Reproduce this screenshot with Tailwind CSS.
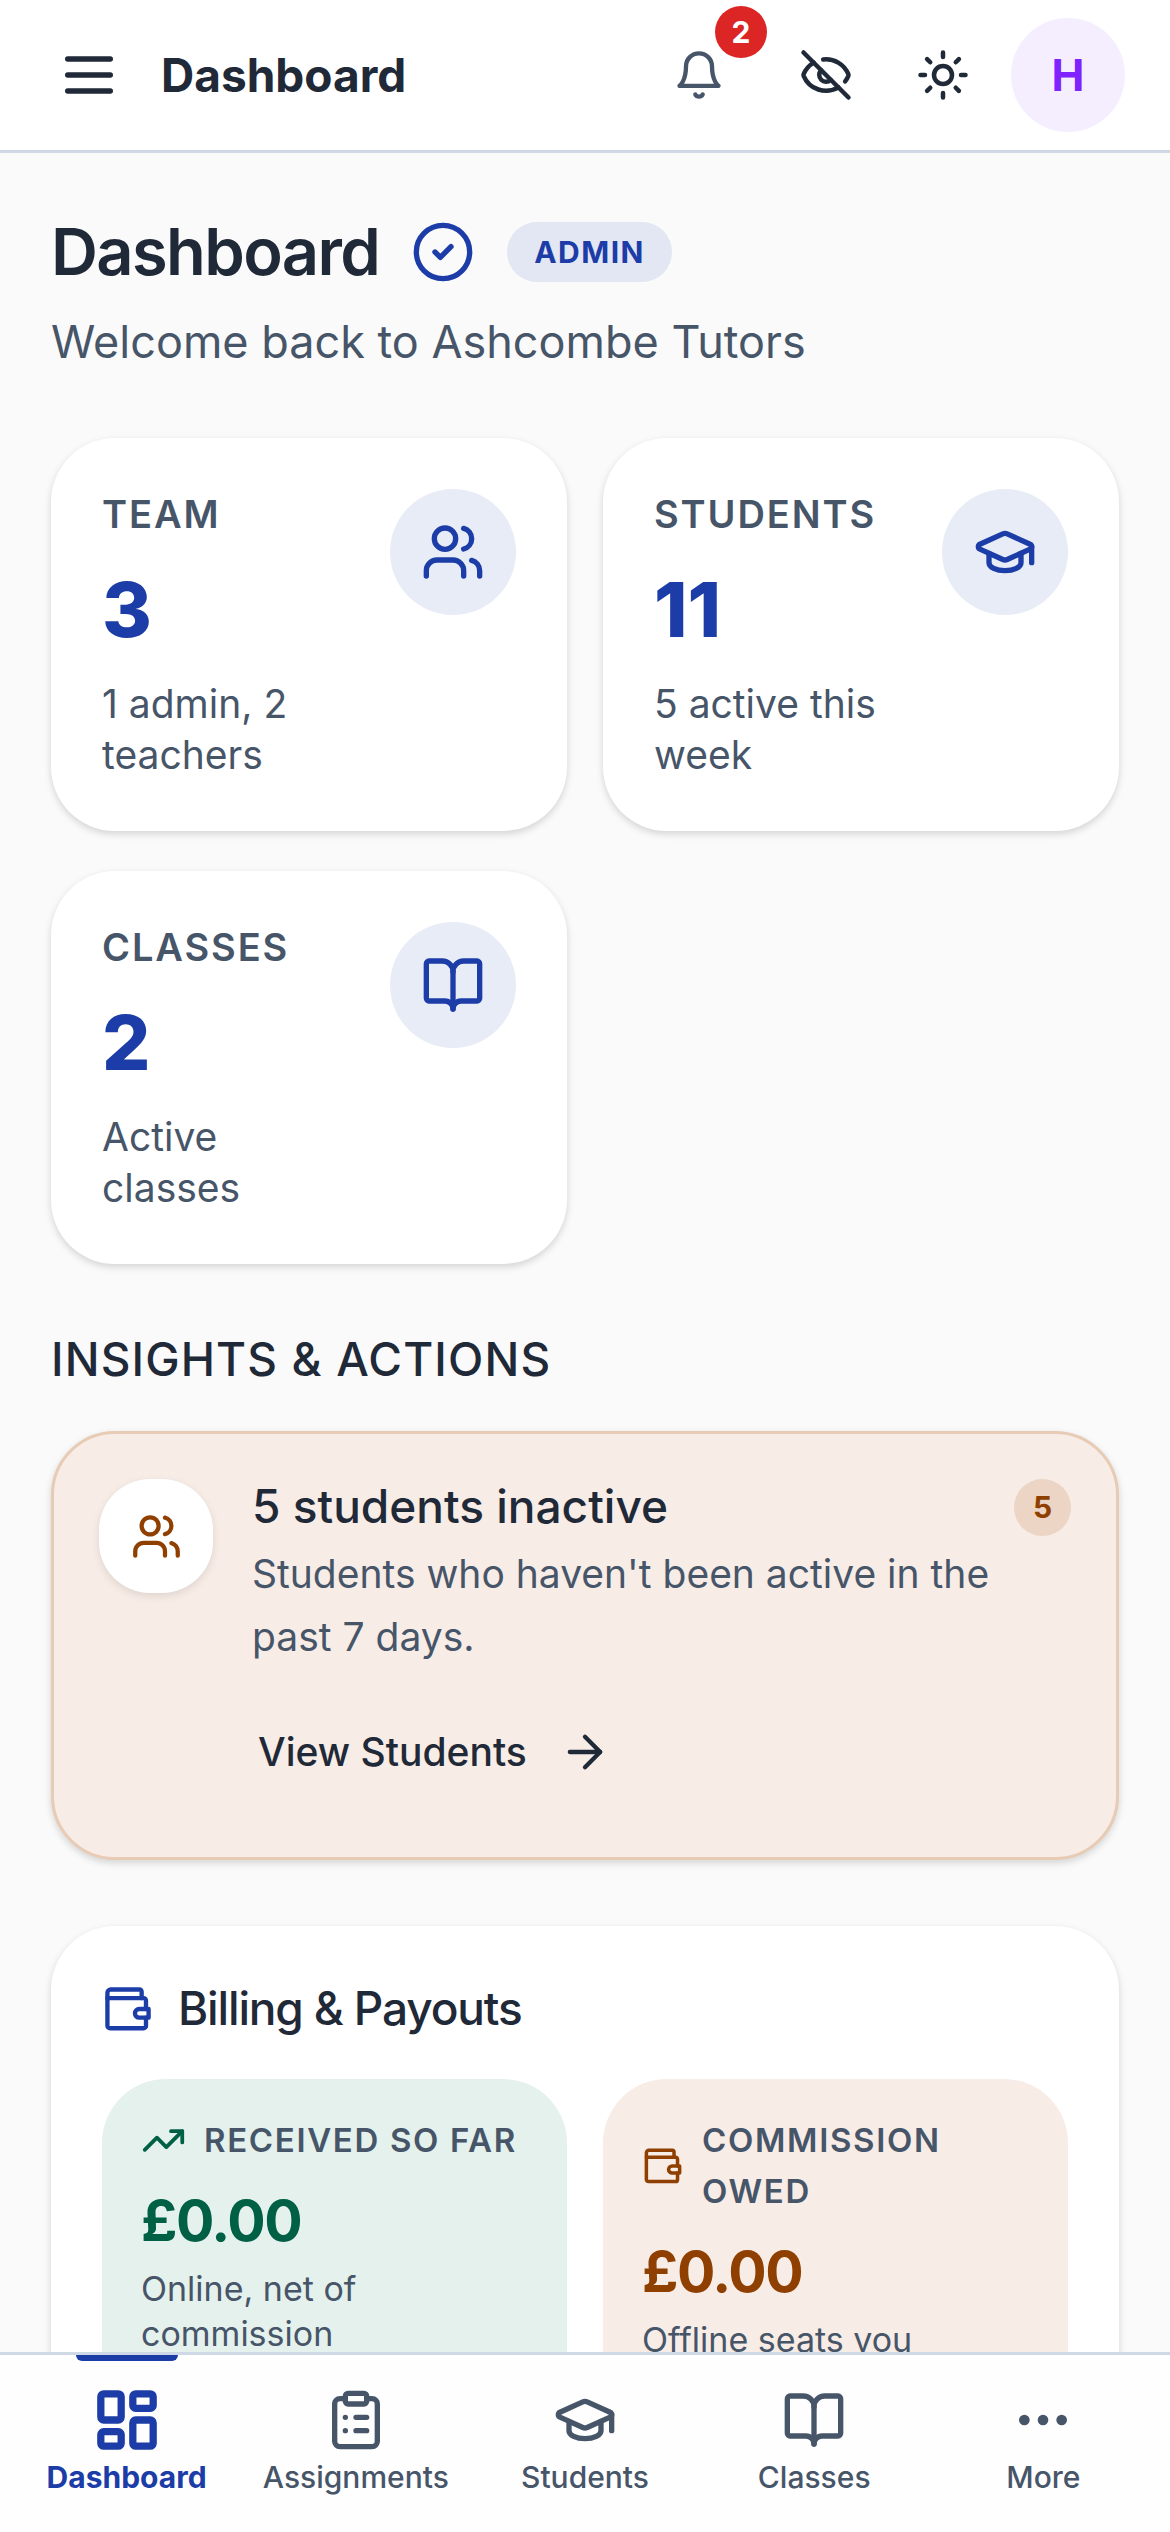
<!DOCTYPE html>
<html lang="en">
<head>
<meta charset="utf-8"/>
<title>Dashboard – Ashcombe Tutors</title>
<meta content="width=device-width, initial-scale=1.0" name="viewport"/>
<script src="https://cdn.jsdelivr.net/npm/@tailwindcss/browser@4"></script>
</head>
<body class="h-screen flex flex-col bg-[#fafafa] text-[#1f2937] font-[Inter,sans-serif]">

<!-- Shared icons -->
<svg class="hidden" xmlns="http://www.w3.org/2000/svg">
<symbol id="i-users" viewBox="0 0 24 24"><path d="M16 21v-2a4 4 0 0 0-4-4H6a4 4 0 0 0-4 4v2"/><circle cx="9" cy="7" r="4"/><path d="M22 21v-2a4 4 0 0 0-3-3.87"/><path d="M16 3.13a4 4 0 0 1 0 7.75"/></symbol>
<symbol id="i-cap" viewBox="0 0 24 24"><path d="M21.42 10.922a1 1 0 0 0-.019-1.838L12.83 5.18a2 2 0 0 0-1.66 0L2.6 9.08a1 1 0 0 0 0 1.832l8.57 3.908a2 2 0 0 0 1.66 0z"/><path d="M22 10v6"/><path d="M6 12.5V16a6 3 0 0 0 12 0v-3.5"/></symbol>
<symbol id="i-book" viewBox="0 0 24 24"><path d="M12 7v14"/><path d="M3 18a1 1 0 0 1-1-1V4a1 1 0 0 1 1-1h5a4 4 0 0 1 4 4 4 4 0 0 1 4-4h5a1 1 0 0 1 1 1v13a1 1 0 0 1-1 1h-6a3 3 0 0 0-3 3 3 3 0 0 0-3-3z"/></symbol>
<symbol id="i-wallet" viewBox="0 0 24 24"><path d="M18.300 7V4a1 1 0 0 0-1-1H4a1.500 1.500 0 0 0-1.500 1.500v15.200a1.200 1.200 0 0 0 1.200 1.200h15.500a1.100 1.100 0 0 0 1.100-1.100V16"/><path d="M2.500 7h16.700a1.100 1.100 0 0 1 1.100 1.100V12"/><path d="M21.500 12h-4.300a2 2 0 0 0 0 4h4.300z"/></symbol>
</svg>

<header class="shrink-0 flex items-center justify-between bg-white border-b-3 border-[#cfd9e5] h-[153px] pl-[57px] pr-[45px]">
<div class="flex items-center gap-10">
<button aria-label="Open menu"><svg class="size-16" viewBox="0 0 24 24" fill="none" stroke="currentColor" stroke-width="2" stroke-linecap="round"><path d="M4 6h16M4 12h16M4 18h16"/></svg></button>
<span class="text-[46px] font-bold">Dashboard</span>
</div>
<div class="flex items-center">
<button aria-label="Notifications, 2 unread" class="relative flex items-center justify-center w-[136px] h-[114px] text-[#475569]">
<svg class="size-13" viewBox="0 0 24 24" fill="none" stroke="currentColor" stroke-width="2" stroke-linecap="round" stroke-linejoin="round"><path d="M6 8a6 6 0 0 1 12 0c0 7 3 9 3 9H3s3-2 3-9"/><path d="M10.300 21a1.940 1.940 0 0 0 3.400 0"/></svg>
<span class="absolute -top-3 right-0 size-13 flex items-center justify-center rounded-full bg-[#dc2626] text-white text-[30px] font-bold">2</span>
</button>
<button aria-label="Hide amounts" class="flex items-center justify-center w-[117px] h-[114px]">
<svg class="size-[54px]" viewBox="0 0 24 24" fill="none" stroke="currentColor" stroke-width="2" stroke-linecap="round" stroke-linejoin="round"><path d="M10.733 5.076a10.744 10.744 0 0 1 11.205 6.575 1 1 0 0 1 0 .696 10.747 10.747 0 0 1-1.444 2.490"/><path d="M14.084 14.158a3 3 0 0 1-4.242-4.242"/><path d="M17.479 17.499a10.750 10.750 0 0 1-15.417-5.151 1 1 0 0 1 0-.696 10.750 10.750 0 0 1 4.446-5.143"/><path d="m2 2 20 20"/></svg>
</button>
<button aria-label="Switch theme" class="flex items-center justify-center w-[117px] h-[114px]">
<svg class="size-[54px]" viewBox="0 0 24 24" fill="none" stroke="currentColor" stroke-width="2" stroke-linecap="round"><circle cx="12" cy="12" r="4"/><path d="M12 2v2M12 20v2M4.930 4.930l1.410 1.410M17.660 17.660l1.410 1.410M2 12h2M20 12h2M6.340 17.660l-1.410 1.410M19.070 4.930l-1.410 1.410"/></svg>
</button>
<button aria-label="Account" class="ml-2.5 size-[114px] rounded-full bg-[#f4eeff] text-[#7f22fe] text-[44px] font-bold">H</button>
</div>
</header>

<main class="flex-1 min-h-0 overflow-y-auto [scrollbar-width:none] px-[51px] pt-[57px]">
<div class="flex items-center">
<h1 class="text-[65px] leading-[84px] font-semibold tracking-tight">Dashboard</h1>
<svg class="size-16 ml-8 text-[#1c3ca8]" viewBox="0 0 24 24" fill="none" stroke="currentColor" stroke-width="2" stroke-linecap="round" stroke-linejoin="round"><circle cx="12" cy="12" r="10"/><path d="m9 12 2 2 4-4"/></svg>
<span class="ml-8 px-[27px] rounded-full bg-[#e3e7f3] text-[#1c3ca8] text-[30px] leading-[60px] font-bold tracking-wider">ADMIN</span>
</div>
<p class="mt-3 text-[45px] leading-[72px] text-[#475569]">Welcome back to Ashcombe Tutors</p>

<section class="mt-[60px] grid grid-cols-2 gap-x-9 gap-y-10">
<div class="flex justify-between bg-white rounded-[64px] p-[51px] shadow-[0_3px_9px_rgba(0,0,0,0.1),0_3px_6px_rgba(0,0,0,0.06)]">
<div>
<h2 class="text-[38px] leading-[51px] font-semibold tracking-wider text-[#475569]">TEAM</h2>
<p class="mt-6 text-[76px] leading-[90px] font-extrabold text-[#1c3ca8]">3</p>
<p class="mt-6 text-[39px] leading-[51px] text-[#475569]">1 admin, 2<br>teachers</p>
</div>
<div class="shrink-0 size-[126px] flex items-center justify-center rounded-full bg-[#e8ecf7] text-[#1c3ca8]"><svg class="size-16" fill="none" stroke="currentColor" stroke-width="2" stroke-linecap="round" stroke-linejoin="round"><use href="#i-users"/></svg></div>
</div>
<div class="flex justify-between bg-white rounded-[64px] p-[51px] shadow-[0_3px_9px_rgba(0,0,0,0.1),0_3px_6px_rgba(0,0,0,0.06)]">
<div>
<h2 class="text-[38px] leading-[51px] font-semibold tracking-wider text-[#475569]">STUDENTS</h2>
<p class="mt-6 text-[76px] leading-[90px] font-extrabold text-[#1c3ca8]">11</p>
<p class="mt-6 text-[39px] leading-[51px] text-[#475569]">5 active this<br>week</p>
</div>
<div class="shrink-0 size-[126px] flex items-center justify-center rounded-full bg-[#e8ecf7] text-[#1c3ca8]"><svg class="size-16" fill="none" stroke="currentColor" stroke-width="2" stroke-linecap="round" stroke-linejoin="round"><use href="#i-cap"/></svg></div>
</div>
<div class="flex justify-between bg-white rounded-[64px] p-[51px] shadow-[0_3px_9px_rgba(0,0,0,0.1),0_3px_6px_rgba(0,0,0,0.06)]">
<div>
<h2 class="text-[38px] leading-[51px] font-semibold tracking-wider text-[#475569]">CLASSES</h2>
<p class="mt-6 text-[76px] leading-[90px] font-extrabold text-[#1c3ca8]">2</p>
<p class="mt-6 text-[39px] leading-[51px] text-[#475569]">Active<br>classes</p>
</div>
<div class="shrink-0 size-[126px] flex items-center justify-center rounded-full bg-[#e8ecf7] text-[#1c3ca8]"><svg class="size-16" fill="none" stroke="currentColor" stroke-width="2" stroke-linecap="round" stroke-linejoin="round"><use href="#i-book"/></svg></div>
</div>
</section>

<h2 class="mt-16 text-[46px] leading-[63px] font-medium tracking-wide">INSIGHTS &amp; ACTIONS</h2>

<section class="mt-10 flex items-start bg-[#f7ece6] border-3 border-[#e8cbb5] rounded-[64px] p-[45px] shadow-[0_3px_9px_rgba(0,0,0,0.1),0_3px_6px_rgba(0,0,0,0.06)]">
<div class="shrink-0 size-[114px] flex items-center justify-center rounded-[51px] bg-white text-[#8f3f00] shadow-[0_3px_9px_rgba(0,0,0,0.1)]"><svg class="size-[51px]" fill="none" stroke="currentColor" stroke-width="2" stroke-linecap="round" stroke-linejoin="round"><use href="#i-users"/></svg></div>
<div class="flex-1 ml-[39px]">
<div class="flex items-start justify-between">
<h3 class="text-[46px] leading-[54px] font-medium">5 students inactive</h3>
<span class="size-[57px] flex items-center justify-center rounded-full bg-[#ecd5c4] text-[#8f3f00] text-[30px] font-bold">5</span>
</div>
<p class="mt-1.5 pr-14 text-[39px] leading-[63px] text-[#475569]">Students who haven't been active in the past 7 days.</p>
<a href="#" class="mt-6 pl-1.5 h-[120px] flex items-center gap-8 text-[39px] font-medium">View Students
<svg class="size-13" viewBox="0 0 24 24" fill="none" stroke="currentColor" stroke-width="2" stroke-linecap="round" stroke-linejoin="round"><path d="M5 12h14"/><path d="m12 5 7 7-7 7"/></svg></a>
</div>
</section>

<section class="mt-[66px] bg-white rounded-[64px] p-[51px] shadow-[0_3px_9px_rgba(0,0,0,0.1),0_3px_6px_rgba(0,0,0,0.06)]">
<div class="flex items-center gap-6">
<svg class="size-13 text-[#1c3ca8]" fill="none" stroke="currentColor" stroke-width="2" stroke-linecap="round" stroke-linejoin="round"><use href="#i-wallet"/></svg>
<h2 class="text-[46px] leading-[63px] font-medium tracking-tight">Billing &amp; Payouts</h2>
</div>
<div class="mt-[39px] grid grid-cols-2 gap-9">
<div class="rounded-[64px] bg-[#e5f1ec] px-[39px] pt-9 pb-24">
<div class="flex items-center gap-[18px]">
<svg class="shrink-0 size-[45px] text-[#006045]" viewBox="0 0 24 24" fill="none" stroke="currentColor" stroke-width="2" stroke-linecap="round" stroke-linejoin="round"><path d="M16 7h6v6"/><path d="m22 7-8.500 8.500-5-5L2 17"/></svg>
<h3 class="text-[33px] leading-[51px] font-semibold tracking-wider text-[#475569] whitespace-nowrap">RECEIVED SO FAR</h3>
</div>
<p class="mt-4 text-[57px] leading-[78px] font-bold tracking-tight text-[#006045]">£0.00</p>
<p class="mt-1.5 text-[34px] leading-[45px] text-[#475569]">Online, net of<br>commission</p>
</div>
<div class="rounded-[64px] bg-[#f7ece6] px-[39px] pt-9 pb-24">
<div class="flex items-center gap-[18px]">
<svg class="shrink-0 size-[42px] text-[#8f3f00]" fill="none" stroke="currentColor" stroke-width="2" stroke-linecap="round" stroke-linejoin="round"><use href="#i-wallet"/></svg>
<h3 class="text-[33px] leading-[51px] font-semibold tracking-wider text-[#475569]">COMMISSION OWED</h3>
</div>
<p class="mt-4 text-[57px] leading-[78px] font-bold tracking-tight text-[#8f3f00]">£0.00</p>
<p class="mt-1.5 text-[34px] leading-[45px] text-[#475569]">Offline seats you</p>
</div>
</div>
</section>
</main>

<nav class="shrink-0 h-[180px] grid grid-cols-5 px-3 bg-[#fefefe] border-t-3 border-[#cfd9e5] text-[30px] leading-[42px] font-medium text-[#475569]">
<a href="#" class="relative flex flex-col items-center pt-[33px] gap-1 text-[#1c3ca8] font-bold">
<span class="absolute top-0 w-[102px] h-1.5 rounded-b-full bg-[#1c3ca8]"></span>
<svg class="size-16" viewBox="1 1 22 22" fill="none" stroke="currentColor" stroke-width="2.500" stroke-linejoin="round"><rect x="3" y="3" width="7" height="9" rx="1"/><rect x="14" y="3" width="7" height="5" rx="1"/><rect x="14" y="12" width="7" height="9" rx="1"/><rect x="3" y="16" width="7" height="5" rx="1"/></svg>
Dashboard</a>
<a href="#" class="flex flex-col items-center pt-[33px] gap-1">
<svg class="size-16" viewBox="0 0 24 24" fill="none" stroke="currentColor" stroke-width="2" stroke-linecap="round" stroke-linejoin="round"><rect x="8" y="2" width="8" height="4" rx="1"/><path d="M16 4h2a2 2 0 0 1 2 2v14a2 2 0 0 1-2 2H6a2 2 0 0 1-2-2V6a2 2 0 0 1 2-2h2"/><path d="M12 11h4M12 16h4M8 11h.010M8 16h.010"/></svg>
Assignments</a>
<a href="#" class="flex flex-col items-center pt-[33px] gap-1">
<svg class="size-16" fill="none" stroke="currentColor" stroke-width="2" stroke-linecap="round" stroke-linejoin="round"><use href="#i-cap"/></svg>
Students</a>
<a href="#" class="flex flex-col items-center pt-[33px] gap-1">
<svg class="size-16" fill="none" stroke="currentColor" stroke-width="2" stroke-linecap="round" stroke-linejoin="round"><use href="#i-book"/></svg>
Classes</a>
<a href="#" class="flex flex-col items-center pt-[33px] gap-1">
<svg class="size-16" viewBox="0 0 24 24" fill="currentColor"><circle cx="5" cy="12" r="2"/><circle cx="12" cy="12" r="2"/><circle cx="19" cy="12" r="2"/></svg>
More</a>
</nav>
</body>
</html>
